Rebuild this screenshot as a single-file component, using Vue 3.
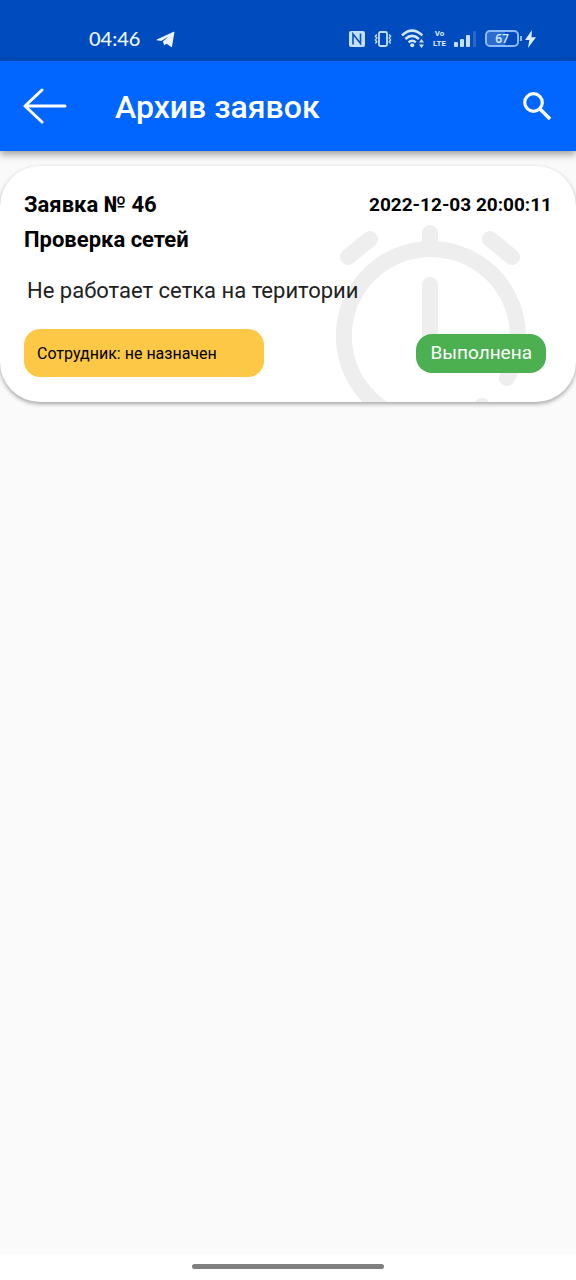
<script setup>
const request = {
  title: 'Заявка № 46',
  date: '2022-12-03 20:00:11',
  subject: 'Проверка сетей',
  description: 'Не работает сетка на територии',
  employee: 'Сотрудник: не назначен',
  status: 'Выполнена',
}
</script>

<template>
  <div class="screen">
    <div class="status-bar">
      <time class="clock">04:46</time>
      <svg class="telegram" width="20" height="16" viewBox="0 0 20 16" aria-hidden="true">
        <path d="M.8 8.600 17.600.8q1-.4.800.700L16 15.400q-.2 1-1.100.4l-4.300-3-2.400 1.500-1.300-3.800 5.600-5-7.300 4.600-4.400-.8q-.8-.3 0-.7Z" fill="#eaf4ff" />
      </svg>
      <span class="spacer"></span>
      <svg class="nfc" width="16" height="18" viewBox="0 0 16 18" aria-hidden="true">
        <rect y="1" width="16" height="16" rx="2" fill="#c4e0ff" />
        <path d="M4 14.500V4l7.500 9.500V3.500" fill="none" stroke="#0950c2" stroke-width="1.600" />
      </svg>
      <svg class="vibrate" width="18" height="16" viewBox="0 0 18 16" fill="none" stroke="#c4e0ff" aria-hidden="true">
        <rect x="5" y="1" width="8" height="14" rx="1.5" stroke-width="1.800" />
        <path d="m2.800 3.500-1.400 1.800 1.400 1.800-1.400 1.800 1.400 1.800-1.400 1.800M15.200 3.500l1.400 1.800-1.400 1.800 1.400 1.800-1.400 1.800 1.400 1.800" stroke-width="1.400" />
      </svg>
      <svg class="wifi" width="24" height="19" viewBox="0 0 24 19" aria-hidden="true">
        <g fill="none" stroke="#d0e7ff" stroke-width="2.500">
          <path d="M1 6.400q10-9.600 20.400 0" />
          <path d="M4.300 10q6.900-6.200 13.700 0" />
          <path d="M7.500 13.400q3.700-3.200 7.300 0" />
        </g>
        <circle cx="11.200" cy="16.200" r="2" fill="#d0e7ff" />
        <path d="m20.500 10 2.500 3.500h-5Zm0 9-2.500-3.500h5Z" fill="#d0e7ff" />
      </svg>
      <span class="volte"><span>Vo</span><span>LTE</span></span>
      <svg class="signal" width="23" height="16" viewBox="0 0 23 16" fill="#c4e0ff" aria-hidden="true">
        <rect y="11" width="4" height="5" rx="1" />
        <rect x="6" y="8" width="4" height="8" rx="1" />
        <rect x="12" y="4" width="4" height="12" rx="1" />
        <rect x="19" width="3" height="16" rx="1" fill="#2967ca" />
      </svg>
      <span class="battery"><span>67</span></span>
      <svg class="bolt" width="11" height="18" viewBox="0 0 11 18" aria-hidden="true">
        <path d="M7 0 0 10h4.300L3 18 11 7.200H6.400Z" fill="#dceeff" />
      </svg>
    </div>

    <header class="app-bar">
      <button class="icon-button" type="button" aria-label="Назад">
        <svg width="44" height="38" viewBox="0 0 44 38" fill="none" stroke="#fff" stroke-width="3" stroke-linecap="round" stroke-linejoin="round">
          <path d="M19 3 2 19l17 16M3 19h39" />
        </svg>
      </button>
      <h1>Архив заявок</h1>
      <button class="icon-button" type="button" aria-label="Поиск">
        <svg width="29" height="29" viewBox="0 0 29 29" fill="none" stroke="#fff">
          <circle cx="10.500" cy="10.500" r="8.800" stroke-width="3.200" />
          <path d="m17 17 10 10" stroke-width="3.600" />
        </svg>
      </button>
    </header>

    <main>
      <article class="card">
        <svg class="alarm" width="192" height="192" viewBox="0 0 192 192" fill="none" stroke="#eee" stroke-width="16" stroke-linecap="round" aria-hidden="true">
          <path d="M173 154A87 87 0 1 0 96 199" />
          <path d="M96 9v16M96 61v51M14 33l22-18M178 33l-22-18M148 182h.1" />
        </svg>
        <div class="row">
          <h2>{{ request.title }}</h2>
          <time class="date">{{ request.date }}</time>
        </div>
        <h3>{{ request.subject }}</h3>
        <p class="description">{{ request.description }}</p>
        <div class="row">
          <span class="employee">{{ request.employee }}</span>
          <span class="status">{{ request.status }}</span>
        </div>
      </article>
    </main>

    <footer class="nav-bar"><span class="handle"></span></footer>
  </div>
</template>

<style>
body {
  margin: 0;
  background: #fafafa;
}
</style>

<style scoped>
.screen {
  display: flex;
  flex-direction: column;
  min-height: 100vh;
  font-family: Roboto, "Noto Sans", sans-serif;
  color: #000;
  background: #fafafa;
}

.status-bar {
  display: flex;
  align-items: center;
  box-sizing: border-box;
  height: 61px;
  padding: 16px 40px 0 89px;
  color: #dceeff;
  background: #004bbd;
}

.clock {
  padding-bottom: 2px;
  font: 500 20px/24px Lato, sans-serif;
  color: #eaf4ff;
}

.telegram {
  margin-left: 16px;
}

.spacer {
  flex: 1;
}

.vibrate {
  margin-left: 9px;
}

.wifi {
  margin-left: 9px;
}

.volte {
  display: flex;
  flex-direction: column;
  align-items: center;
  width: 13px;
  margin-left: 8px;
  font: 700 8px/10px Roboto, sans-serif;
}

.signal {
  margin-left: 8px;
}

.battery {
  position: relative;
  box-sizing: border-box;
  width: 34px;
  height: 17px;
  margin-left: 8px;
  border: 2px solid #8dbcf5;
  border-radius: 5px;
  font: 600 12px/13px "Open Sans", sans-serif;
  text-align: center;
  background: linear-gradient(90deg, #2c6dd2 60%, transparent 60%);
}

.battery::after {
  content: "";
  position: absolute;
  top: 4px;
  right: -5px;
  width: 2px;
  height: 5px;
  background: #8dbcf5;
}

.bolt {
  margin-left: 6px;
}

.app-bar {
  position: relative;
  display: flex;
  align-items: center;
  box-sizing: border-box;
  height: 90px;
  padding: 0 24px 0 23px;
  color: #fff;
  background: #0066ff;
  box-shadow: 0 3px 8px rgba(0, 0, 0, 0.4);
}

.icon-button {
  display: flex;
  padding: 0;
  border: 0;
  background: none;
  cursor: pointer;
}

h1 {
  flex: 1;
  margin: 0 0 0 48px;
  padding-top: 2px;
  font-size: 32px;
  line-height: 40px;
  font-weight: 500;
}

main {
  flex: 1;
  padding-top: 15px;
}

.card {
  position: relative;
  overflow: hidden;
  padding: 25px 24px;
  border-radius: 40px;
  background: #fff;
  box-shadow: 0 2px 4px rgba(0, 0, 0, 0.35);
}

.alarm {
  position: absolute;
  top: 58px;
  right: 50px;
  overflow: visible;
}

.row {
  position: relative;
  display: flex;
  align-items: center;
  justify-content: space-between;
}

h2,
h3 {
  position: relative;
  margin: 0;
  font-size: 22px;
  line-height: 28px;
  font-weight: 700;
}

h3 {
  margin-top: 7px;
}

.date {
  font-size: 19px;
  line-height: 28px;
  font-weight: 700;
}

.description {
  position: relative;
  margin: 23px 3px 24px;
  font-size: 22px;
  line-height: 28px;
  color: #212121;
}

.employee {
  box-sizing: border-box;
  width: 240px;
  padding: 13px 13px 11px;
  border-radius: 16px;
  font-size: 16px;
  line-height: 24px;
  background: #fdc846;
}

.status {
  margin-right: 6px;
  padding: 7px 14px 8px;
  border-radius: 16px;
  font-size: 19px;
  line-height: 24px;
  color: #fff;
  background: #4caf50;
}

.nav-bar {
  display: flex;
  justify-content: center;
  box-sizing: border-box;
  height: 26px;
  padding-top: 10px;
  background: #fff;
}

.handle {
  width: 192px;
  height: 5px;
  border-radius: 3px;
  background: #808080;
}
</style>
